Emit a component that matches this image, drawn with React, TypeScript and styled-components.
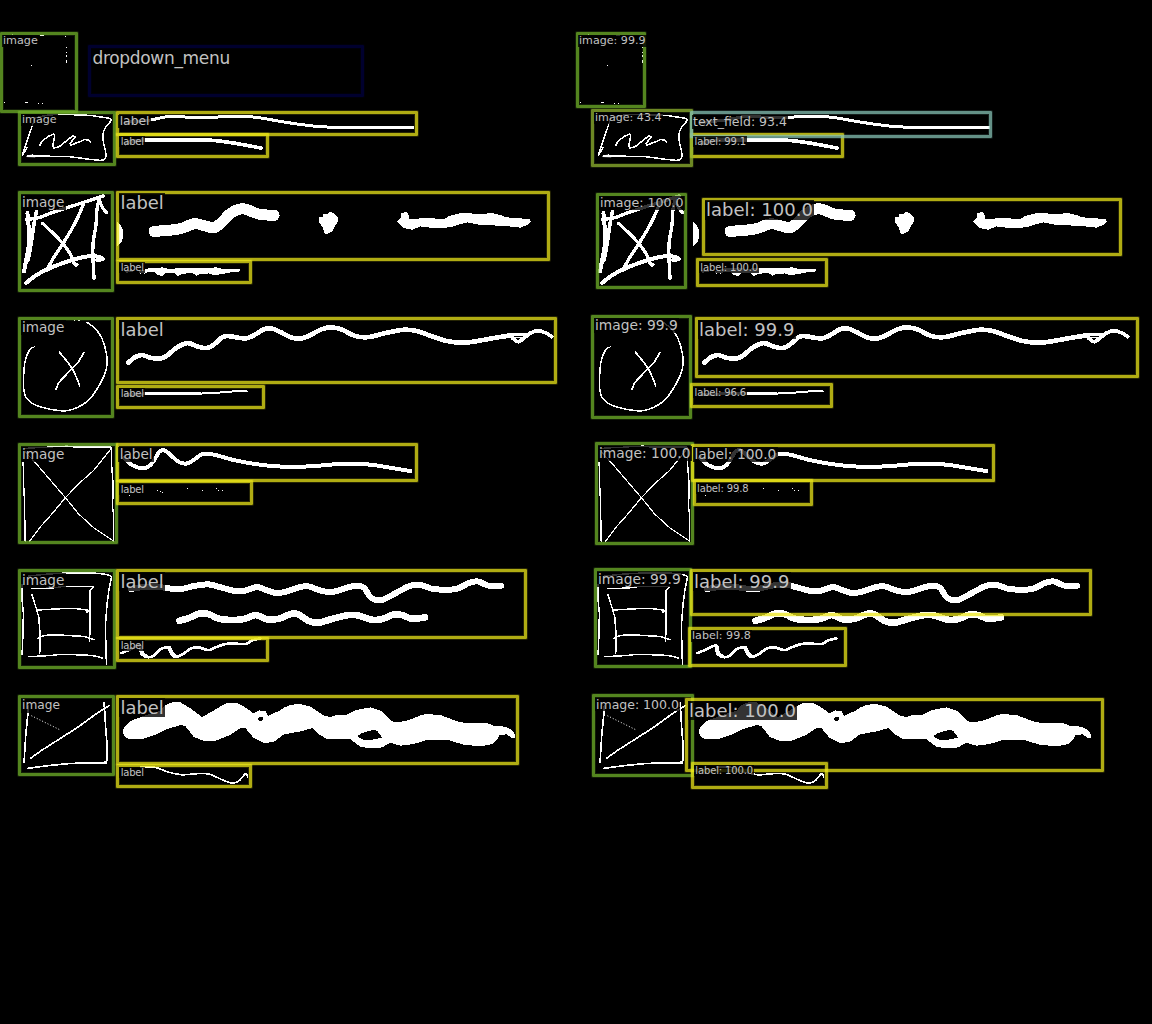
import React from "react";
import styled, { createGlobalStyle } from "styled-components";

const GlobalStyle = createGlobalStyle`
  html, body { margin: 0; background: #000; }
`;

const Comparison = styled.main`
  display: grid;
  grid-template-columns: 576px 576px;
  width: 1152px;
  height: 1024px;
  overflow: hidden;
  background: #000;
`;

const Canvas = styled.section`
  position: relative;
  height: 1024px;
`;

const Drawing = styled.svg`
  display: block;
  width: 576px;
  height: 1024px;
`;

const tones = {
  green: "112, 178, 42",
  yellow: "235, 230, 25",
  olive: "145, 181, 48",
  teal: "133, 193, 180",
  navy: "0, 0, 62",
};
type Tone = keyof typeof tones;

// Bounds are given along the centre line of the 3px border.
const Bounds = styled.div<{ $b: number[]; $tone: Tone }>`
  position: absolute;
  box-sizing: border-box;
  left: ${(p) => Math.round(p.$b[0] - 1.5)}px;
  top: ${(p) => Math.round(p.$b[1] - 1.5)}px;
  width: ${(p) => Math.round(p.$b[2] + 1.5) - Math.round(p.$b[0] - 1.5)}px;
  height: ${(p) => Math.round(p.$b[3] + 1.5) - Math.round(p.$b[1] - 1.5)}px;
  border: 3px solid rgba(${(p) => tones[p.$tone]}, 0.75);
  border-radius: 1px;
  box-shadow: 0 0 0 1px rgba(${(p) => tones[p.$tone]}, 0.16),
    inset 0 0 0 1px rgba(${(p) => tones[p.$tone]}, 0.16);
`;

const Tag = styled.span<{ $x: number; $base: number; $size: number; $track: number }>`
  position: absolute;
  left: ${(p) => p.$x - 1.5}px;
  top: ${(p) => p.$base - p.$size * 0.86}px;
  padding: 0 1.5px;
  font: ${(p) => p.$size}px / 1.1 "DejaVu Sans", sans-serif;
  letter-spacing: ${(p) => p.$track}px;
  white-space: nowrap;
  color: #c2c2c2;
  background: rgba(0, 0, 0, 0.8);
`;

type Item = {
  text: string;
  tone: Tone;
  b: number[];
  at: [number, number, number, number?]; // text x, baseline, font size, tracking
};

const truth: Item[] = [
  { text: "image", tone: "green", b: [1.5, 33.7, 76.5, 111.3], at: [3, 44.5, 11.2] },
  { text: "dropdown_menu", tone: "navy", b: [89.5, 46.5, 362.5, 95.5], at: [92.5, 63.3, 17, -0.32] },
  { text: "image", tone: "green", b: [19.5, 112.7, 114.7, 164.5], at: [22, 123.5, 11.1] },
  { text: "label", tone: "yellow", b: [117.5, 112.7, 416.5, 134.4], at: [119.7, 125.3, 12.3] },
  { text: "label", tone: "yellow", b: [117.5, 134.6, 267.5, 156.5], at: [120.7, 145, 10, -0.2] },
  { text: "image", tone: "green", b: [19.5, 192.7, 112.7, 290.5], at: [22, 206.3, 13.6] },
  { text: "label", tone: "yellow", b: [117.5, 192.7, 548.5, 259.5], at: [120.5, 208.7, 17.9] },
  { text: "label", tone: "yellow", b: [117.5, 261, 250.5, 282.5], at: [120.7, 271, 10, -0.2] },
  { text: "image", tone: "green", b: [19.5, 318.7, 112.7, 416.5], at: [22, 332, 13.6] },
  { text: "label", tone: "yellow", b: [117.5, 318.7, 555.5, 382.5], at: [120.5, 335, 17.9] },
  { text: "label", tone: "yellow", b: [117.5, 386.5, 263.5, 407.5], at: [120.7, 397, 10, -0.2] },
  { text: "image", tone: "green", b: [19.5, 444.7, 116.5, 542.5], at: [22, 458.3, 13.6] },
  { text: "label", tone: "yellow", b: [117.5, 444.7, 416.5, 480.5], at: [119.7, 458.3, 13.6] },
  { text: "label", tone: "yellow", b: [117.5, 481.7, 251.5, 503.5], at: [120.7, 492.3, 10, -0.2] },
  { text: "image", tone: "green", b: [19.5, 570.7, 114.7, 667.5], at: [22, 584.5, 13.6] },
  { text: "label", tone: "yellow", b: [117.5, 570.7, 525.5, 637.5], at: [120.5, 587, 17.9] },
  { text: "label", tone: "yellow", b: [117.5, 638.7, 267.5, 660.5], at: [120.7, 649, 10, -0.2] },
  { text: "image", tone: "green", b: [19.5, 696.7, 113.7, 774.5], at: [22, 709.7, 12.2] },
  { text: "label", tone: "yellow", b: [117.5, 696.7, 517.5, 763.5], at: [120.5, 713, 17.9] },
  { text: "label", tone: "yellow", b: [117.5, 765, 250.5, 786.5], at: [120.7, 775.3, 10, -0.2] },
];

const predicted: Item[] = [
  { text: "image: 99.9", tone: "green", b: [1.5, 33.7, 68.3, 106.5], at: [3, 44.5, 11.1] },
  { text: "label: 99.1", tone: "yellow", b: [115.5, 134.5, 266.5, 156.5], at: [118.5, 145, 10, -0.14] },
  { text: "image: 43.4", tone: "olive", b: [16.7, 110.7, 115.3, 165.5], at: [19, 121.5, 11.1] },
  { text: "text_field: 93.4", tone: "teal", b: [115.5, 112.7, 414.5, 136.5], at: [117, 126, 12.5] },
  { text: "image: 100.0", tone: "green", b: [21.5, 194.7, 109.5, 287.5], at: [24, 207.3, 12.6] },
  { text: "label: 100.0", tone: "yellow", b: [127.7, 199.5, 544.5, 254.5], at: [130, 215.9, 18] },
  { text: "label: 100.0", tone: "yellow", b: [121.7, 259.7, 250.5, 285.7], at: [124.3, 270.3, 10, -0.14] },
  { text: "image: 99.9", tone: "green", b: [16.5, 316.7, 114.7, 417.5], at: [19, 330, 13.8] },
  { text: "label: 99.9", tone: "yellow", b: [120.5, 318.7, 561.5, 376.7], at: [123, 335, 18] },
  { text: "label: 96.6", tone: "yellow", b: [115.5, 384.5, 255.5, 406.5], at: [118.5, 395.3, 10, -0.14] },
  { text: "image: 100.0", tone: "green", b: [20.5, 443.7, 116.5, 543.5], at: [23, 457.5, 13.8] },
  { text: "label: 100.0", tone: "yellow", b: [116.5, 445.7, 417.5, 480.5], at: [118.5, 459, 13.8] },
  { text: "label: 99.8", tone: "yellow", b: [118.5, 480.7, 235.5, 504.5], at: [121, 491.3, 10, -0.14] },
  { text: "image: 99.9", tone: "green", b: [19.5, 569.7, 114.7, 666.5], at: [22, 583.5, 13.8] },
  { text: "label: 99.9", tone: "yellow", b: [115.5, 570.7, 514.5, 614.5], at: [118, 587, 18] },
  { text: "label: 99.8", tone: "yellow", b: [113.7, 628.7, 269.5, 665.5], at: [116, 639.5, 11.1] },
  { text: "image: 100.0", tone: "green", b: [17.5, 695.7, 116.5, 775.5], at: [20, 708.3, 12.5] },
  { text: "label: 100.0", tone: "yellow", b: [110.7, 699.7, 526.5, 770.7], at: [113, 716, 18] },
  { text: "label: 100.0", tone: "yellow", b: [116.5, 763.7, 250.5, 787.5], at: [119.3, 774, 10, -0.14] },
];

// Turns a run of sampled pen positions into a smooth cubic path.
function smooth(n: number[]) {
  const p: number[][] = [];
  for (let i = 0; i < n.length; i += 2) p.push([n[i], n[i + 1]]);
  let d = `M${p[0]}`;
  for (let i = 0; i < p.length - 1; i++) {
    const a = p[i - 1] || p[i], b = p[i], c = p[i + 1], e = p[i + 2] || c;
    d += `C${b[0] + (c[0] - a[0]) / 6},${b[1] + (c[1] - a[1]) / 6} ${c[0] - (e[0] - b[0]) / 6},${c[1] - (e[1] - b[1]) / 6} ${c[0]},${c[1]}`;
  }
  return d;
}

const Pen = ({ pts, w = 4 }: { pts: number[]; w?: number }) => <path d={smooth(pts)} strokeWidth={w} />;

const Specks = ({ at }: { at: number[][] }) => (
  <g fill="#fff" stroke="none">
    {at.map(([x, y, w = 3, h = 3], i) => <rect key={i} x={x} y={y} width={w} height={h} />)}
  </g>
);

// One row of the sketch, in thirds of a pixel below its top offset.
const Row = ({ y, children }: { y: number; children: React.ReactNode }) => (
  <g transform={`translate(0.4 ${y + 0.4}) scale(0.33333)`}>{children}</g>
);

function Sketch() {
  return (
    <Drawing viewBox="0 0 576 1024" fill="none" stroke="#fff" strokeLinecap="round" strokeLinejoin="round" shapeRendering="crispEdges">
      <Row y={20}>
        <Specks at={[[118, 44, 14, 3], [36, 42], [195, 46], [198, 79], [198, 94], [198, 105, 3, 6], [198, 120, 3, 9], [92, 134], [11, 245], [75, 245, 8, 3], [112, 247], [125, 247]]} />
        <path strokeWidth="4.5" d="M66 405L80 360L95 318L103 293Q150 278 220 283L270 285L330 294Q336 298 328 306Q306 325 308 350Q307 370 314 385L317 405Q316 420 300 420L270 417L200 408L82 407M66 405L80 382" />
        <path fill="#fff" strokeWidth="1" d="M78 408L97 402L103 410Z" />
        <path strokeWidth="4.5" d="M118 376L124 363L145 347L160 341L163 348L157 374L160 383L176 379L195 364L216 347L225 348L209 370L212 374L240 363L252 357L264 359L271 367" />
        <Pen w={9} pts={[375, 306, 410, 303, 455, 298, 500, 289, 560, 290, 620, 291, 700, 288, 760, 290, 800, 296, 852, 305, 922, 315, 982, 320, 1100, 320, 1237, 321]} />
        <Pen w={11} pts={[375, 370, 400, 362, 440, 359, 540, 358, 625, 359, 700, 368, 782, 383]} />
      </Row>
      <Row y={180}>
        <Pen w={12} pts={[81, 98, 85, 140, 87, 180, 79, 230, 71, 273]} />
        <Pen w={11} pts={[108, 94, 101, 130, 92, 190, 83, 240]} />
        <Pen w={10} pts={[78, 117, 115, 112, 160, 95, 240, 69, 308, 47]} />
        <Pen w={10} pts={[250, 69, 225, 126, 188, 189, 160, 231, 140, 269]} />
        <Pen w={10} pts={[127, 129, 155, 156, 187, 189, 210, 221, 222, 251, 230, 253]} />
        <Pen w={10} pts={[299, 50, 290, 85, 287, 130, 278, 190, 278, 240, 281, 294]} />
        <Pen w={10} pts={[297, 59, 306, 81, 319, 97]} />
        <Pen w={12} pts={[77, 308, 105, 286, 140, 267, 185, 249, 240, 232, 280, 227, 307, 235, 290, 239]} />
        <path fill="#fff" stroke="none" d="M351 126Q368 138 369 160Q368 186 351 198Z" />
        <Pen w={33} pts={[461, 153, 500, 150, 540, 145, 582, 130, 615, 137, 640, 142, 662, 128, 692, 98, 728, 85, 775, 101, 821, 105]} />
        <path fill="#fff" stroke="none" d="M957 111L968 110V100L980 102L990 94L1002 100L1012 109L1014 120L1005 135L996 153L980 161L971 158L968 142L957 127Z" />
        <path fill="#fff" stroke="none" d="M1188 123L1202 113V99L1213 95L1223 97L1228 117L1260 114L1280 112L1330 117L1345 107L1378 99L1392 97L1420 100L1480 99L1500 104L1520 111L1535 112L1588 116L1592 125L1580 134L1560 142L1540 139L1510 137L1480 135L1440 134L1400 126L1380 131L1355 139L1330 143L1300 143L1260 138L1235 148L1210 143Z" />
        <Pen w={8} pts={[378, 273, 395, 271]} />
        <Pen w={9} pts={[420, 275, 438, 273]} />
        <path fill="#fff" stroke="none" d="M428 283L435 265L460 263L485 261L508 266L545 262L575 264L620 262L650 261L670 266L720 267V273L690 276L665 281L640 285L626 279L600 281L588 286L575 277L545 281L532 287L522 278L498 277L486 287L472 283L462 274L445 274Z" />
      </Row>
      <Row y={305}>
        <Specks at={[[222, 44], [233, 44, 7, 3], [102, 122]]} />
        <Pen w={4.5} pts={[98, 126, 88, 133, 76, 160, 71, 190, 70, 250, 79, 279, 110, 301, 180, 316, 217, 312, 265, 284, 298, 237, 318, 190, 319, 150, 305, 100, 285, 70, 260, 51]} />
        <Pen w={5} pts={[177, 140, 215, 189, 238, 241]} />
        <Pen w={5} pts={[250, 142, 232, 172, 205, 200, 176, 231, 167, 252]} />
        <Pen w={14} pts={[384, 172, 403, 156, 425, 149, 450, 157, 475, 160, 495, 154, 530, 126, 562, 113, 590, 123, 618, 128, 640, 118, 665, 96, 683, 92, 735, 99, 765, 87, 790, 72, 813, 69, 840, 80, 870, 95, 895, 100, 920, 94, 965, 71, 995, 66, 1025, 73, 1065, 92, 1105, 95, 1155, 83, 1210, 73, 1250, 77, 1290, 91, 1340, 107, 1390, 112, 1430, 107, 1480, 98, 1530, 90]} />
        <Pen w={9} pts={[1520, 90, 1550, 86, 1575, 87]} />
        <Pen w={11} pts={[1532, 93, 1542, 103, 1554, 109, 1570, 99, 1588, 84, 1610, 76, 1635, 82, 1654, 94]} />
        <Pen w={5} pts={[1542, 97, 1570, 96]} />
        <Pen w={9} pts={[375, 267, 480, 265, 600, 265]} />
        <Pen w={6} pts={[590, 265, 650, 262, 700, 258, 740, 258]} />
      </Row>
      <Row y={435}>
        <Specks at={[[471, 164], [479, 166], [485, 170], [560, 158], [605, 164], [648, 158], [654, 163], [665, 164], [387, 179]]} />
        <path strokeWidth="4" d="M72 39L200 32L222 35L332 35L335 110L338 140L337 220L340 240L339 317M68 80L70 150L73 220L74 317" />
        <path strokeWidth="3.6" d="M332 40L280 105L235 145L195 187L150 241L120 274L88 317M75 50L105 82L155 140L195 187L235 236L280 277L340 317" />
        <Pen w={12} pts={[372, 67, 395, 89, 425, 99, 445, 93, 460, 77, 475, 51, 489, 44, 508, 56, 532, 78, 556, 85, 578, 75, 603, 57, 625, 55, 650, 60, 700, 74, 760, 85, 830, 93, 930, 93, 1000, 87, 1100, 87, 1170, 97, 1230, 107]} />
      </Row>
      <Row y={560}>
        <path strokeWidth="4.5" d="M65 72V120L69 160L67 240L65 283M85 47Q150 39 200 38H275Q315 39 334 48L326 85L320 130L315 195L318 312M86 289L155 285Q190 279 240 284Q290 284 307 294" />
        <path strokeWidth="4.5" d="M94 85L155 83L190 78L279 79L269 90L268 243M94 102L108 145L115 170L119 220L118 280M108 149L180 145H230L267 150L258 156M113 233Q130 221 180 224L250 228L282 238" />
        <Pen w={18} pts={[391, 86, 437, 79, 485, 81, 535, 87, 580, 77, 625, 72, 665, 82, 710, 93, 740, 89, 770, 80, 800, 90, 830, 98, 860, 93, 895, 81, 925, 78, 965, 92, 1005, 93, 1045, 80, 1075, 76, 1092, 83, 1107, 106, 1125, 119, 1150, 117, 1190, 96, 1230, 76, 1265, 75, 1300, 86, 1365, 86, 1405, 68, 1432, 63, 1465, 76, 1502, 76]} />
        <Pen w={20} pts={[537, 181, 565, 173, 595, 160, 625, 161, 660, 176, 725, 177, 765, 164, 800, 177, 835, 175, 870, 161, 892, 161, 925, 182, 955, 187, 1000, 174, 1045, 164, 1072, 165, 1115, 178, 1145, 176, 1180, 162, 1205, 164, 1235, 175, 1274, 171]} />
        <Pen w={8} pts={[364, 278, 385, 269, 418, 255, 424, 267, 425, 281, 440, 290, 458, 287, 480, 267, 506, 262, 517, 284, 528, 290, 548, 281, 570, 265, 595, 261, 625, 269, 655, 257, 687, 249, 735, 251, 755, 240, 780, 234]} />
        <Pen w={12} pts={[422, 260, 425, 279, 439, 288]} />
        <Pen w={12} pts={[507, 263, 515, 279, 524, 288]} />
      </Row>
      <Row y={685}>
        <path strokeWidth="5" d="M84 60L82 90L76 150L71 230M90 219L125 194L180 159L230 127L285 87L325 61M311 52L313 80L316 130L320 180L320 226L314 229M82 249L140 241L200 235L260 232H318" />
        <path strokeWidth="3" strokeDasharray="3 6" strokeLinecap="butt" d="M93 91L178 133" />
        <path fill="#fff" fillRule="evenodd" stroke="none" d="M366 140L371 125L392 106L440 88L480 76L497 58L515 51L540 51L570 69L605 95L640 75L680 52L710 52L740 69L758 84L775 75L795 77L803 91L840 75L850 67L870 59L895 55L930 64L950 77L970 90L990 95L1005 90L1040 88L1065 74L1110 66L1145 77L1170 105L1185 111L1215 107L1240 98L1265 88L1280 86L1320 89L1340 96L1370 108L1395 113H1460L1480 121L1515 124L1535 134L1545 150L1543 158L1532 157L1520 147L1498 148L1492 160L1475 176L1440 183L1390 178L1340 163H1280L1240 176L1200 181L1170 172L1145 186L1110 189L1080 184L1050 162L980 161L955 146L935 128L900 138L850 147L820 170L790 173L760 158L735 128L720 128L690 148L650 165L615 168L580 155L555 122L540 119L500 131L460 150L430 160L390 162L375 156ZM772 100L775 96L786 95L790 101L784 107L775 105ZM1071 152L1085 143L1120 133L1132 138L1145 157L1110 164L1084 162Z" />
        <Pen w={5} pts={[420, 245, 465, 246, 500, 259, 545, 268, 600, 264, 630, 267, 665, 283, 695, 293, 715, 287, 735, 265, 742, 275]} />
      </Row>
    </Drawing>
  );
}

function Annotated({ items }: { items: Item[] }) {
  return (
    <Canvas>
      <Sketch />
      {items.map((it, i) => <Bounds key={i} $b={it.b} $tone={it.tone} />)}
      {items.map((it, i) => (
        <Tag key={i} $x={it.at[0]} $base={it.at[1]} $size={it.at[2]} $track={it.at[3] ?? 0}>{it.text}</Tag>
      ))}
    </Canvas>
  );
}

export default function App() {
  return (
    <>
      <GlobalStyle />
      <Comparison>
        <Annotated items={truth} />
        <Annotated items={predicted} />
      </Comparison>
    </>
  );
}
